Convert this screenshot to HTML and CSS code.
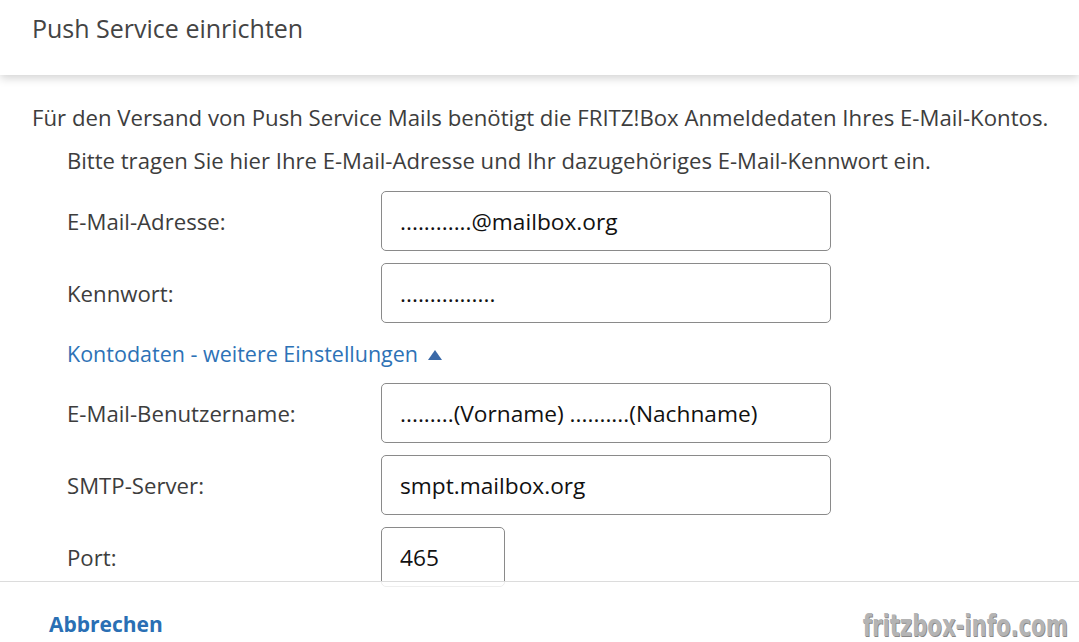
FILE: index.html
```html
<!DOCTYPE html>
<html lang="de">
<head>
  <meta charset="UTF-8" />
  <title>Push Service einrichten</title>
  <link rel="stylesheet" href="styles.css">
</head>
<body>
  <header class="dialog-head">
    <h1>Push Service einrichten</h1>
  </header>

  <main class="dialog-body">
    <p class="intro">Für den Versand von Push Service Mails benötigt die FRITZ!Box Anmeldedaten Ihres E-Mail-Kontos.</p>

    <div class="account">
      <p class="hint">Bitte tragen Sie hier Ihre E-Mail-Adresse und Ihr dazugehöriges E-Mail-Kennwort ein.</p>

      <div class="row">
        <label for="mail">E-Mail-Adresse:</label>
        <input type="text" id="mail" class="field" value="............@mailbox.org">
      </div>
      <div class="row">
        <label for="pass">Kennwort:</label>
        <input type="text" id="pass" class="field" value="................">
      </div>

      <a href="#" class="toggle">Kontodaten - weitere Einstellungen <span class="arrow"></span></a>

      <div class="row">
        <label for="user">E-Mail-Benutzername:</label>
        <input type="text" id="user" class="field" value=".........(Vorname) ..........(Nachname)">
      </div>
      <div class="row">
        <label for="smtp">SMTP-Server:</label>
        <input type="text" id="smtp" class="field" value="smpt.mailbox.org">
      </div>
      <div class="row">
        <label for="port">Port:</label>
        <input type="text" id="port" class="field small" value="465">
      </div>
    </div>
  </main>

  <footer class="dialog-foot">
    <a href="#" class="cancel">Abbrechen</a>
    <span class="ghost">Dieser Server unterstützt eine verschlüsselte Verbindung (SSL)</span>
    <span class="watermark">fritzbox-info.com</span>
  </footer>
</body>
</html>
```

FILE: styles.css
```css
html, body {
  margin: 0;
  padding: 0;
}
body {
  font-family: 'Open Sans', Lato, sans-serif;
  color: #3d3d3d;
  background: #fff;
  width: 1079px;
  height: 642px;
  overflow: hidden;
}
.dialog-head {
  height: 75px;
  background: #fff;
  box-shadow: 0 3px 9px rgba(0, 0, 0, 0.18);
  position: relative;
  z-index: 1;
}
.dialog-head h1 {
  margin: 0;
  padding: 12px 0 0 32px;
  font-size: 25px;
  line-height: 32px;
  font-weight: 400;
  color: #444;
}
.dialog-body {
  height: 506px;
}
.intro {
  margin: 0;
  padding: 29px 0 0 32px;
  font-size: 22.2px;
  line-height: 28px;
  white-space: nowrap;
}
.account {
  padding-left: 67px;
}
.hint {
  margin: 14px 0 17px;
  font-size: 22.1px;
  line-height: 28px;
  white-space: nowrap;
}
.row {
  display: flex;
  align-items: center;
  margin-bottom: 12px;
}
.row label {
  width: 314px;
  font-size: 22.2px;
}
.field {
  box-sizing: border-box;
  width: 450px;
  height: 60px;
  padding: 0 18px;
  border: 1px solid #8a8a8a;
  border-radius: 5px;
  font-family: 'Open Sans', sans-serif;
  font-size: 22.7px;
  color: #111;
  background: #fff;
}
.field.small {
  width: 124px;
}
.toggle {
  display: block;
  margin: 17px 0 15px;
  font-size: 21.5px;
  line-height: 28px;
  color: #2d72b6;
  text-decoration: none;
}
.arrow {
  display: inline-block;
  width: 0;
  height: 0;
  margin-left: 4px;
  border-left: 7px solid transparent;
  border-right: 7px solid transparent;
  border-bottom: 10px solid #3a69a8;
  vertical-align: 2px;
}
.dialog-foot {
  position: relative;
  height: 61px;
  box-sizing: border-box;
  border-top: 1px solid #dcdcdc;
  background: rgba(255, 255, 255, 0.85);
  padding: 28px 0 0 49px;
  display: flex;
  align-items: flex-start;
}
.cancel {
  flex-shrink: 0;
  font-size: 21px;
  font-weight: 700;
  color: #2a6fb4;
  text-decoration: none;
  line-height: 28px;
}
.ghost {
  flex: 1;
  min-width: 0;
  overflow: hidden;
  margin: 27px 0 0 108px;
  font-size: 20px;
  color: #eee;
  white-space: nowrap;
}
.watermark {
  flex-shrink: 0;
  display: inline-block;
  margin-right: 11px;
  font-family: 'DejaVu Sans Condensed', 'Liberation Sans Narrow', sans-serif;
  font-weight: 700;
  font-size: 31px;
  line-height: 30px;
  white-space: nowrap;
  color: #b4b4b4;
  text-shadow: 1px 1px 0 #888;
  transform: scaleX(0.76);
  transform-origin: right center;
}
```
